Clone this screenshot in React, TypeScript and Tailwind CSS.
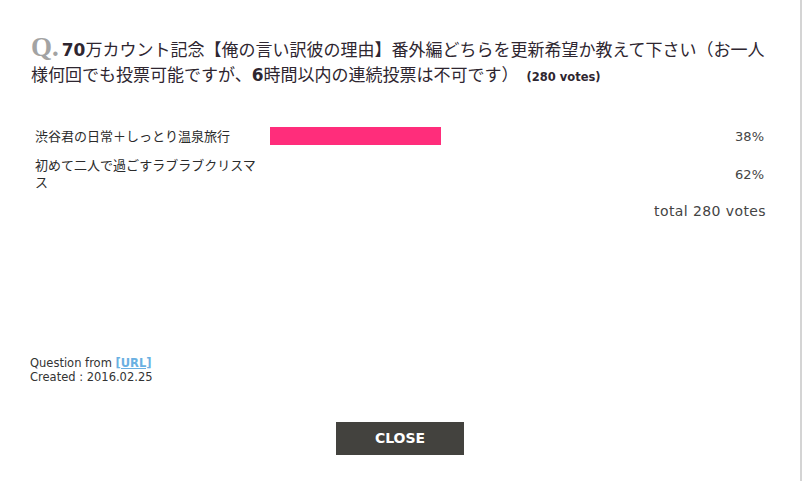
import React from "react";

const latin = { fontFamily: '"DejaVu Sans", "Noto Sans CJK JP", sans-serif' };

export default function App() {
  return (
    <div className="w-[802px] h-[481px] bg-white border-r-2 border-[#d4d4d4] flex flex-col" style={latin}>
      <div className="pl-[31px] pr-[32px] pt-[34px] text-[17px] leading-[25px] text-[#2e2630]">
        <span
          className="text-[27px] leading-none font-bold text-[#a3a3a3] mr-[3px]"
          style={{ fontFamily: '"Liberation Serif", serif' }}
        >
          Q.
        </span>
        <span className="font-bold">70</span>万カウント記念【俺の言い訳彼の理由】番外編どちらを更新希望か教えて下さい（お一人様何回でも投票可能ですが、
        <span className="font-bold">6</span>時間以内の連続投票は不可です）
        <span className="text-[11.5px] font-bold ml-[8px]">(280 votes)</span>
      </div>

      <div className="mt-[37px] pl-[35px] pr-[36px] flex flex-col gap-[12px] text-[13px] leading-[17px] text-[#2b2b2b]">
        <div className="flex items-center">
          <div className="w-[225px] mr-[10px] shrink-0">渋谷君の日常＋しっとり温泉旅行</div>
          <div className="flex-1">
            <div className="h-[18px] w-[171px] bg-[#ff2d7b]" />
          </div>
          <div className="text-right text-[#444]">38%</div>
        </div>
        <div className="flex items-center">
          <div className="w-[225px] mr-[10px] shrink-0">初めて二人で過ごすラブラブクリスマス</div>
          <div className="flex-1" />
          <div className="text-right text-[#444]">62%</div>
        </div>
      </div>

      <div className="mt-[11px] pr-[34px] text-right text-[14px] tracking-[0.4px] leading-[18px] text-[#444]">
        total 280 votes
      </div>

      <div className="mt-[136px] pl-[30px] text-[11.5px] leading-[14px] text-[#333]">
        <div>
          Question from{" "}
          <span className="font-bold text-[#6ab0e2] underline">[URL]</span>
        </div>
        <div>Created : 2016.02.25</div>
      </div>

      <div className="mt-[38px] flex justify-center">
        <div className="w-[128px] h-[33px] bg-[#43423e] text-white font-bold text-[14px] flex items-center justify-center">
          CLOSE
        </div>
      </div>
    </div>
  );
}
